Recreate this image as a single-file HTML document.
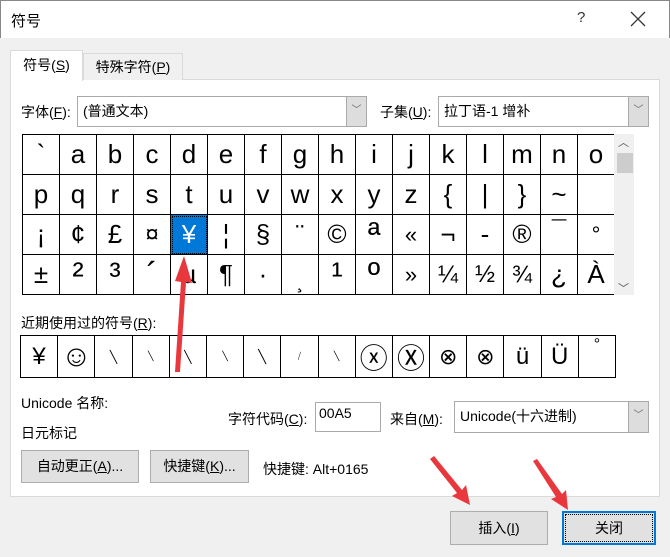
<!DOCTYPE html>
<html><head><meta charset="utf-8"><style>
*{box-sizing:border-box;margin:0;padding:0}
body{width:670px;height:557px;background:#f0f0f0;font-family:"Liberation Sans","Noto Sans CJK SC",sans-serif;font-size:14px;color:#000;position:relative;overflow:hidden}
.a{position:absolute}
#title{left:0;top:0;width:670px;height:38px;background:#fff;border:1px solid #888;border-bottom:none}
#panel{left:10px;top:79px;width:650px;height:418px;background:#fff;border:1px solid #dadada}
.tab{height:30px;border:1px solid #dadada;border-bottom:none;text-align:center;line-height:28px;font-size:14px}
.combo{background:#fff;border:1px solid #aaa;height:31px;line-height:29px;padding-left:5px;font-size:14px}
.dd{position:absolute;right:0;top:0;width:20px;height:29px;background:#ddd;border-left:1px solid #aaa;color:#666;font-size:10px;text-align:center;line-height:27px}
table{border-collapse:collapse;position:absolute}
td{border:1px solid #000;width:37px;text-align:center;padding:0;font-family:"Liberation Sans","DejaVu Sans",sans-serif}
#grid td{height:40px;font-size:26px}
#rec td{height:42px;font-size:24px;width:37.2px}
#rec{border:1px solid #888}
.btn{background:#e1e1e1;border:1px solid #adadad;text-align:center;font-size:14px}
u{text-decoration:underline}
.sup{font-size:34px!important;line-height:30px}
</style></head><body>
<div class="a" id="title"></div>
<div class="a" style="left:11px;top:10px;font-size:15px">符号</div>
<div class="a" style="left:577px;top:9px;font-size:15px;color:#333">?</div>
<svg class="a" style="left:630px;top:11px" width="16" height="16"><path d="M1 1L15 15M15 1L1 15" stroke="#333" stroke-width="1.3"/></svg>
<div class="a" id="panel"></div>
<div class="a tab" style="left:10px;top:50px;width:73px;height:31px;background:#fff">符号(<u>S</u>)</div>
<div class="a tab" style="left:83px;top:53px;width:100px;height:27px;background:#f0f0f0;line-height:27px">特殊字符(<u>P</u>)</div>
<div class="a" style="left:21px;top:102px">字体(<u>F</u>):</div>
<div class="a combo" style="left:77px;top:96px;width:290px">(普通文本)<div class="dd">﹀</div></div>
<div class="a" style="left:380px;top:102px">子集(<u>U</u>):</div>
<div class="a combo" style="left:438px;top:96px;width:211px">拉丁语-1 增补<div class="dd">﹀</div></div>
<table id="grid" style="left:22px;top:134px">
<tr><td>`</td><td>a</td><td>b</td><td>c</td><td>d</td><td>e</td><td>f</td><td>g</td><td>h</td><td>i</td><td>j</td><td>k</td><td>l</td><td>m</td><td>n</td><td>o</td></tr>
<tr><td>p</td><td>q</td><td>r</td><td>s</td><td>t</td><td>u</td><td>v</td><td>w</td><td>x</td><td>y</td><td>z</td><td>{</td><td>|</td><td>}</td><td>~</td><td></td></tr>
<tr><td>¡</td><td>¢</td><td>£</td><td style="font-size:24px">¤</td><td style="background:#0078d7;color:#fff;outline:1px dotted #000;outline-offset:-2px">¥</td><td>¦</td><td>§</td><td>¨</td><td>©</td><td class="sup">ª</td><td style="font-size:22px">«</td><td>¬</td><td>-</td><td>®</td><td style="vertical-align:top">¯</td><td style="font-size:22px">°</td></tr>
<tr><td>±</td><td class="sup">²</td><td class="sup">³</td><td class="sup">´</td><td>µ</td><td>¶</td><td>·</td><td style="vertical-align:bottom;font-size:20px">¸</td><td class="sup">¹</td><td class="sup">º</td><td style="font-size:22px">»</td><td style="font-size:24px">¼</td><td style="font-size:24px">½</td><td style="font-size:24px">¾</td><td>¿</td><td>À</td></tr>
</table>
<div class="a" style="left:614px;top:134px;width:20px;height:161px;background:#f0f0f0"></div>
<div class="a" style="left:617px;top:153px;width:16px;height:20px;background:#cdcdcd"></div>
<div class="a" style="left:618px;top:134px;font-size:11px;color:#555">︿</div>
<div class="a" style="left:618px;top:280px;font-size:11px;color:#555">﹀</div>
<div class="a" style="left:21px;top:313px">近期使用过的符号(<u>R</u>):</div>
<table id="rec" style="left:20px;top:335px">
<tr><td>¥</td><td style="font-size:30px">☺</td><td style="font-size:12px;font-weight:bold">╲</td><td style="font-size:9px">╲</td><td style="font-size:12px">╲</td><td style="font-size:9px">╲</td><td style="font-size:13px;font-weight:bold">╲</td><td style="font-size:9px">⧸</td><td style="font-size:9px">╲</td><td style="font-size:28px">ⓧ</td><td style="font-size:28px">Ⓧ</td><td style="font-size:22px">⊗</td><td style="font-size:22px">⊗</td><td>ü</td><td>Ü</td><td style="font-size:16px;vertical-align:top">°</td></tr>
</table>
<div class="a" style="left:21px;top:393px">Unicode 名称:</div>
<div class="a" style="left:21px;top:423px">日元标记</div>
<div class="a" style="left:228px;top:409px">字符代码(<u>C</u>):</div>
<div class="a" style="left:315px;top:402px;width:66px;height:30px;background:#fff;border:1px solid #aaa;padding:2px 3px">00A5</div>
<div class="a" style="left:390px;top:409px">来自(<u>M</u>):</div>
<div class="a combo" style="left:454px;top:401px;width:195px;height:32px">Unicode(十六进制)<div class="dd" style="height:30px">﹀</div></div>
<div class="a btn" style="left:21px;top:450px;width:118px;height:33px;line-height:31px">自动更正(<u>A</u>)...</div>
<div class="a btn" style="left:150px;top:450px;width:99px;height:33px;line-height:31px">快捷键(<u>K</u>)...</div>
<div class="a" style="left:263px;top:459px">快捷键: Alt+0165</div>
<div class="a btn" style="left:450px;top:511px;width:98px;height:34px;line-height:32px">插入(<u>I</u>)</div>
<div class="a btn" style="left:562px;top:511px;width:94px;height:34px;line-height:30px;border:2px solid #0078d7;outline:1px dotted #000;outline-offset:-4px">关闭</div>
<svg class="a" style="left:0;top:0" width="670" height="557">
<g fill="#e8383d">
<polygon points="175,372 180,372 186,282 192,283 184,256 175,281 181,282"/>
<polygon points="430,459 434,456 462,490 466,485 470,505 452,496 457,493"/>
<polygon points="533,461 537,459 562,494 566,490 568,510 551,499 556,497"/>
</g>
</svg>
</body></html>
